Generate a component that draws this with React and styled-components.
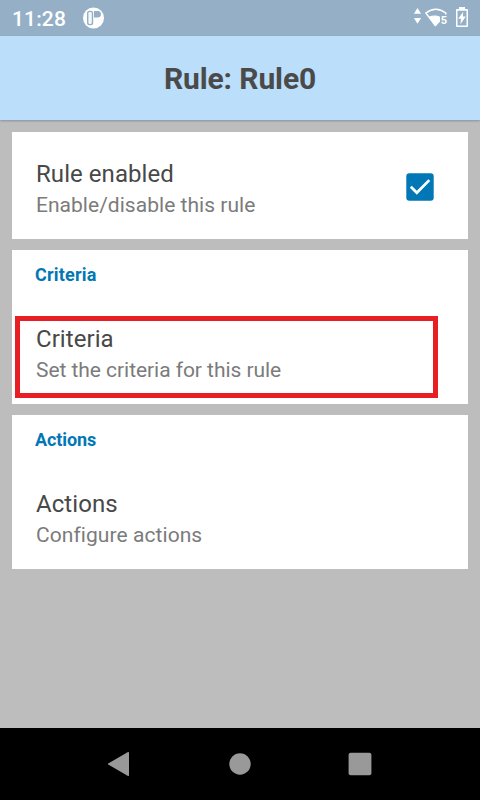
import React from 'react';
import styled, { createGlobalStyle } from 'styled-components';

const GlobalStyle = createGlobalStyle`
  * { box-sizing: border-box; }
  body { margin: 0; background: #bdbdbd; font-family: Roboto, sans-serif; }
`;

const Screen = styled.div`
  display: flex;
  flex-direction: column;
  width: 480px;
  height: 800px;
  background: #bdbdbd;
  overflow: hidden;
`;

const StatusBar = styled.header`
  display: flex;
  align-items: center;
  flex: none;
  height: 36px;
  padding: 0 11px 0 12px;
  background: #95b0c6;
  color: #fff;
`;

const Clock = styled.span`
  width: 71px;
  padding-top: 2px;
  font-size: 21px;
  line-height: 24px;
  font-weight: 500;
  letter-spacing: 0.15px;
  white-space: nowrap;
`;

const StatusIcons = styled.div`
  margin-left: auto;
  height: 36px;
  svg { display: block; }
`;

const TitleBar = styled.div`
  display: flex;
  align-items: center;
  justify-content: center;
  flex: none;
  height: 84px;
  padding-top: 2px;
  background: #bbdefb;
  box-shadow: 0 1px 2px rgba(60, 80, 100, 0.4);
`;

const Title = styled.h1`
  margin: 0;
  font-size: 30px;
  line-height: 36px;
  font-weight: 700;
  letter-spacing: -0.12px;
  color: #4a4a4a;
`;

const Content = styled.main`
  display: flex;
  flex-direction: column;
  flex: 1;
  gap: 11px;
  padding: 12px 12px 0;
`;

const Card = styled.section`
  position: relative;
  display: flex;
  flex-direction: column;
  height: ${(p) => (p.$titled ? 154 : 107)}px;
  padding-top: ${(p) => (p.$titled ? 13 : 27)}px;
  background: #fff;
`;

const Category = styled.h2`
  margin: 0 0 37px;
  padding-left: 23px;
  font-size: 18px;
  line-height: 24px;
  font-weight: 700;
  letter-spacing: ${(p) => p.$tracking || 0}px;
  color: #0277b5;
`;

const Preference = styled.div`
  display: flex;
  align-items: center;
  justify-content: space-between;
  padding: 0 32px 0 24px;
`;

const Name = styled.div`
  font-size: 24px;
  line-height: 30px;
  letter-spacing: 0.06px;
  color: #484848;
`;

const Summary = styled.div`
  font-size: 21px;
  line-height: 25px;
  padding-top: 4px;
  letter-spacing: ${(p) => p.$tracking || 0}px;
  color: #7b7b7b;
`;

const Checkbox = styled.svg`
  display: block;
  flex: none;
  margin-top: -3px;
`;

const Highlight = styled.div`
  position: absolute;
  left: 3px;
  top: 66px;
  width: 423px;
  height: 82px;
  border: 5px solid #e81e25;
`;

const NavBar = styled.nav`
  display: flex;
  align-items: center;
  justify-content: center;
  gap: 84px;
  flex: none;
  height: 72px;
  background: #000;
  svg { display: block; }
`;

function Item({ name, summary, tracking, children }) {
  return (
    <Preference>
      <div>
        <Name>{name}</Name>
        <Summary $tracking={tracking}>{summary}</Summary>
      </div>
      {children}
    </Preference>
  );
}

export default function App() {
  return (
    <>
      <GlobalStyle />
      <Screen>
        <StatusBar>
          <Clock>11:28</Clock>
          <svg width="21" height="22" viewBox="0 0 21 22">
            <circle cx="10.5" cy="11" r="10.5" fill="#fff" />
            <rect x="4.7" y="4.4" width="4.8" height="13.2" rx="1.8" fill="#f4f8fa" stroke="#95b0c6" strokeWidth="1.4" />
            <path d="M11 4h3.6a3.2 3.2 0 0 1 0 6.6H11z" fill="#95b0c6" />
          </svg>
          <StatusIcons>
            <svg width="56" height="36" viewBox="413 0 56 36" fill="#fff">
              <path d="M417.5 8l3.6 5.8h-7.2zM417.5 23.7l3.6-5.8h-7.2z" />
              <path d="M445.8 14.6V13Q435.8 5.4 425.8 13L435.4 25.6" fill="none" stroke="#fff" strokeWidth="1.5" />
              <path d="M428.5 16.8Q435 14 440 16.8V21.4L435.5 26.6z" />
              <text x="440.7" y="24.4" fontSize="11" fontWeight="700" fontFamily="Roboto, sans-serif">5</text>
              <path fillRule="evenodd" d="M459 7h6v2h2q1 0 1 1v16q0 1-1 1h-10q-1 0-1-1V10q0-1 1-1h2zM457.5 10.8v14.6h9V10.8z" />
              <path d="M463.2 11.8l-5 7h2.8l-.6 5.4 5.4-7.6h-2.9z" />
            </svg>
          </StatusIcons>
        </StatusBar>
        <TitleBar>
          <Title>Rule: Rule0</Title>
        </TitleBar>
        <Content>
          <Card>
            <Item name="Rule enabled" summary="Enable/disable this rule" tracking={0.03}>
              <Checkbox width="32" height="32" viewBox="0 0 32 32">
                <rect x="2.3" y="2.3" width="27.4" height="27.4" rx="3" fill="#0277b5" />
                <path d="M6.8 15.7l6 6.1L25.3 9.1" fill="none" stroke="#fff" strokeWidth="2.7" />
              </Checkbox>
            </Item>
          </Card>
          <Card $titled>
            <Category $tracking={0.2}>Criteria</Category>
            <Item name="Criteria" summary="Set the criteria for this rule" tracking={-0.05} />
            <Highlight />
          </Card>
          <Card $titled>
            <Category $tracking={-0.08}>Actions</Category>
            <Item name="Actions" summary="Configure actions" tracking={0.07} />
          </Card>
        </Content>
        <NavBar>
          <svg width="36" height="36" viewBox="0 0 36 36" fill="#999">
            <path d="M6.2 17.4L26 6.1q1-.5 1 .6v22.6q0 1.1-1 .6L6.2 18.6q-.8-.6 0-1.2z" />
          </svg>
          <svg width="36" height="36" viewBox="0 0 36 36" fill="#999">
            <circle cx="18" cy="18" r="10.7" />
          </svg>
          <svg width="36" height="36" viewBox="0 0 36 36" fill="#999">
            <rect x="6.6" y="6.7" width="22.8" height="22.6" rx="2" />
          </svg>
        </NavBar>
      </Screen>
    </>
  );
}
